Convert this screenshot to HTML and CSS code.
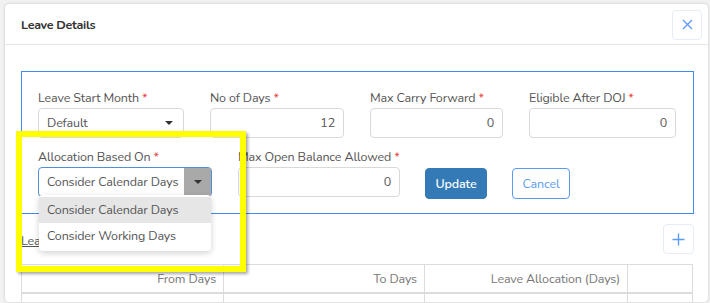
FILE: index.html
```html
<!DOCTYPE html>
<html>
<head>
<meta charset="utf-8">
<link rel="stylesheet" href="styles.css">
</head>
<body>
<div class="page">
  <div class="modal">
    <div class="modal-header">
      <h4 class="modal-title">Leave Details</h4>
      <button class="icon-btn close-btn" aria-label="Close">
        <svg width="11" height="11" viewBox="0 0 11 11"><path d="M1 1L10 10M10 1L1 10" stroke="#5b9cf6" stroke-width="1.4" fill="none"/></svg>
      </button>
    </div>
    <div class="modal-body">
      <div class="form-panel">
        <div class="row row-1">
          <div class="field">
            <label>Leave Start Month <span class="req">*</span></label>
            <div class="select">Default<span class="caret"></span></div>
          </div>
          <div class="field">
            <label>No of Days <span class="req">*</span></label>
            <div class="input">12</div>
          </div>
          <div class="field">
            <label>Max Carry Forward <span class="req">*</span></label>
            <div class="input">0</div>
          </div>
          <div class="field">
            <label>Eligible After DOJ <span class="req">*</span></label>
            <div class="input">0</div>
          </div>
        </div>
        <div class="row row-2">
          <div class="field f-alloc">
            <label>Allocation Based On <span class="req">*</span></label>
            <div class="select focused">Consider Calendar Days<span class="arrow-box"><span class="caret"></span></span></div>
          </div>
          <div class="field f-open">
            <label>Max Open Balance Allowed <span class="req">*</span></label>
            <div class="input">0</div>
          </div>
          <button class="btn btn-primary">Update</button>
          <button class="btn btn-outline">Cancel</button>
        </div>
      </div>
      <div class="sub-bar">
        <a class="link">Leave Allocation</a>
        <button class="icon-btn plus-btn" aria-label="Add">
          <svg width="13" height="13" viewBox="0 0 13 13"><path d="M6.5 0.5V12.5M0.5 6.5H12.5" stroke="#5b9cf6" stroke-width="1.4" fill="none"/></svg>
        </button>
      </div>
      <table class="grid">
        <thead>
          <tr><th>From Days</th><th>To Days</th><th>Leave Allocation (Days)</th><th></th></tr>
        </thead>
        <tbody>
          <tr><td></td><td></td><td></td><td></td></tr>
        </tbody>
      </table>
    </div>
  </div>
  <ul class="dropdown">
    <li class="active">Consider Calendar Days</li>
    <li>Consider Working Days</li>
  </ul>
  <div class="highlight"></div>
</div>
</body>
</html>
```
FILE: styles.css
```css
* { box-sizing: border-box; }
html, body { margin: 0; padding: 0; }
body {
  font-family: "Nunito", Lato, "Open Sans", sans-serif;
  font-size: 12.5px;
  letter-spacing: -0.15px;
  color: #555;
  background: #f2f2f2;
  width: 710px;
  height: 303px;
  overflow: hidden;
}
.page {
  position: relative;
  padding: 3px 1px 0 4px;
  height: 303px;
  overflow: hidden;
}
.modal {
  background: #fff;
  border: 1px solid #e2e2e2;
  border-radius: 5px;
  height: 300px;
  overflow: hidden;
  box-shadow: 0 0 3px rgba(0,0,0,0.08);
}
.modal-header {
  height: 41px;
  display: flex;
  align-items: center;
  justify-content: space-between;
  padding: 0 6px 0 16px;
  border-bottom: 1px solid #e6e6e6;
}
.modal-title {
  margin: 0;
  font-size: 12.5px;
  letter-spacing: -0.3px;
  font-weight: 700;
  color: #333;
}
.icon-btn {
  background: #fff;
  border: 1px solid #e6ecf5;
  border-radius: 4px;
  display: flex;
  align-items: center;
  justify-content: center;
  padding: 0;
}
.close-btn { width: 30px; height: 30px; margin-top: 1px; }
.modal-body {
  padding: 26px 14px 0 16px;
}
.form-panel {
  border: 1px solid #3f8cf3;
  padding: 17px 16px 14px 16px;
}
.row { display: flex; }
.row-1 { gap: 26px; }
.row-1 .field:nth-child(1) { width: 146px; }
.row-1 .field:nth-child(2) { width: 134px; }
.row-1 .field:nth-child(3) { width: 133px; }
.row-1 .field:nth-child(4) { width: 147px; }
.row-2 { margin-top: 10px; align-items: flex-start; }
.f-alloc { width: 174px; margin-right: 26px; }
.f-open { width: 162px; margin-right: 25px; }
label {
  display: block;
  height: 18px;
  line-height: 18px;
  margin-bottom: 1px;
  color: #555;
  white-space: nowrap;
}
.req { color: #e53935; }
.input, .select {
  height: 30px;
  border: 1px solid #d9d9d9;
  border-radius: 4px;
  line-height: 28px;
  padding: 0 8px;
  color: #555;
  white-space: nowrap;
}
.input { text-align: right; }
.select {
  position: relative;
  padding-left: 8px;
}
.select .caret {
  position: absolute;
  right: 10px;
  top: 12px;
  width: 0; height: 0;
  border-left: 4px solid transparent;
  border-right: 4px solid transparent;
  border-top: 4px solid #333;
}
.select.focused { border-color: #4f8edb; }
.arrow-box {
  position: absolute;
  right: 0; top: 0; bottom: 0;
  width: 27px;
  background: #a9a9a9;
}
.arrow-box .caret { right: 9px; top: 12px; }
.btn {
  font-family: inherit;
  font-size: 12.5px;
  letter-spacing: -0.15px;
  height: 31px;
  border-radius: 4px;
  margin-top: 20px;
  padding: 0;
  cursor: pointer;
}
.btn-primary {
  width: 62px;
  background: #337ab7;
  border: 1px solid #337ab7;
  color: #fff;
  font-weight: 600;
  margin-right: 25px;
}
.btn-outline {
  width: 58px;
  background: #fff;
  border: 1px solid #5a9bef;
  color: #5a9bef;
}
.sub-bar {
  display: flex;
  justify-content: space-between;
  align-items: center;
  height: 50px;
}
.link {
  color: #555;
  text-decoration: underline;
  margin-top: 2px;
}
.plus-btn { width: 31px; height: 30px; }
.grid {
  width: 672px;
  border-collapse: collapse;
  table-layout: fixed;
}
.grid th {
  height: 28px;
  font-weight: 400;
  color: #777;
  text-align: right;
  padding: 0 7px;
  border: 1px solid #dcdcdc;
  border-bottom: 2px solid #dcdcdc;
}
.grid th:nth-child(1) { width: 202px; }
.grid th:nth-child(2) { width: 201px; }
.grid th:nth-child(3) { width: 203px; }
.grid td { height: 28px; border: 1px solid #dcdcdc; }
.dropdown {
  position: absolute;
  left: 39px;
  top: 195px;
  width: 172px;
  margin: 0;
  padding: 2px 0;
  list-style: none;
  background: #fff;
  border-radius: 4px;
  box-shadow: 0 2px 6px rgba(0,0,0,0.18);
}
.dropdown li {
  height: 26px;
  line-height: 26px;
  padding-left: 8px;
  color: #555;
}
.dropdown li.active { background: #e6e6e6; }
.highlight {
  position: absolute;
  left: 16px;
  top: 131px;
  width: 230px;
  height: 141px;
  border: 6px solid #ffff00;
  box-shadow: 2px 2px 3px rgba(0,0,0,0.35);
}
```
